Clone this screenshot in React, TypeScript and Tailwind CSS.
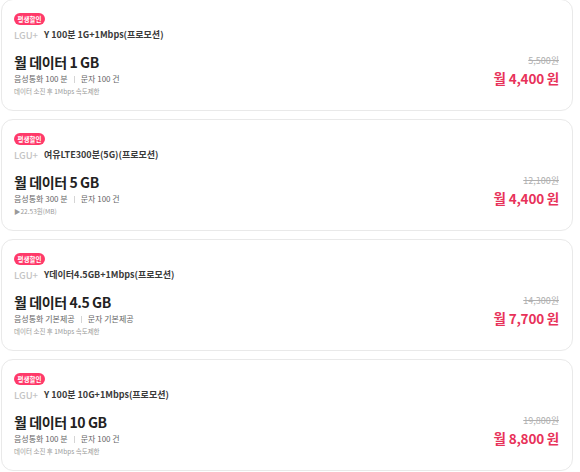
import React from "react";

type Plan = {
  name: string;
  title: string;
  voice: string;
  sms: string;
  note: string;
  orig: string;
  price: string;
};

const plans: Plan[] = [
  { name: "Y 100분 1G+1Mbps(프로모션)", title: "월 데이터 1 GB", voice: "음성통화 100 분", sms: "문자 100 건", note: "데이터 소진 후 1Mbps 속도제한", orig: "5,500원", price: "월 4,400 원" },
  { name: "여유LTE300분(5G)(프로모션)", title: "월 데이터 5 GB", voice: "음성통화 300 분", sms: "문자 100 건", note: "▶22.53원(MB)", orig: "12,100원", price: "월 4,400 원" },
  { name: "Y데이터4.5GB+1Mbps(프로모션)", title: "월 데이터 4.5 GB", voice: "음성통화 기본제공", sms: "문자 기본제공", note: "데이터 소진 후 1Mbps 속도제한", orig: "14,300원", price: "월 7,700 원" },
  { name: "Y 100분 10G+1Mbps(프로모션)", title: "월 데이터 10 GB", voice: "음성통화 100 분", sms: "문자 100 건", note: "데이터 소진 후 1Mbps 속도제한", orig: "19,800원", price: "월 8,800 원" },
];

function Card({ p }: { p: Plan }) {
  return (
    <div className="box-border flex h-[112px] justify-between rounded-[12px] border border-[#e9e9e9] bg-white pl-[12px] pr-[13px] pt-[13px]">
      <div className="flex flex-col">
        <div className="flex">
          <span className="flex h-[12px] items-center rounded-full bg-[#ff3a6a] px-[3.5px] text-[6.5px] font-bold leading-none text-white">
            평생할인
          </span>
        </div>
        <div className="mt-[3px] flex h-[14px] items-center text-[9px] leading-[14px]">
          <span className="mr-[6px] text-[9.5px] font-medium text-[#c4c4c4]">LGU+</span>
          <span className="font-bold text-[#3a3a3a]">{p.name}</span>
        </div>
        <div className="mt-[10px] h-[20px] text-[14px] font-bold leading-[20px] tracking-[-0.4px] text-[#222]">
          {p.title}
        </div>
        <div className="mt-[1px] flex h-[12px] items-center text-[8px] leading-[12px] text-[#666]">
          <span>{p.voice}</span>
          <span className="mx-[6px] h-[7px] w-px bg-[#d5d5d5]" />
          <span>{p.sms}</span>
        </div>
        <div className="mt-[1px] h-[10px] text-[6.5px] leading-[10px] text-[#999]">{p.note}</div>
      </div>
      <div className="flex flex-col items-end pt-[42px]">
        <div className="h-[12px] text-[9px] leading-[12px] text-[#b0b0b0] line-through">{p.orig}</div>
        <div className="mt-px h-[20px] text-[13.5px] font-bold leading-[20px] tracking-[-0.2px] text-[#e8325a]">{p.price}</div>
      </div>
    </div>
  );
}

export default function App() {
  return (
    <div
      className="-mt-px flex w-[580px] flex-col gap-[8px] bg-white pl-px pr-[7px]"
      style={{ fontFamily: '"Noto Sans CJK KR", "Noto Sans", sans-serif' }}
    >
      {plans.map((p, i) => (
        <Card key={i} p={p} />
      ))}
    </div>
  );
}
